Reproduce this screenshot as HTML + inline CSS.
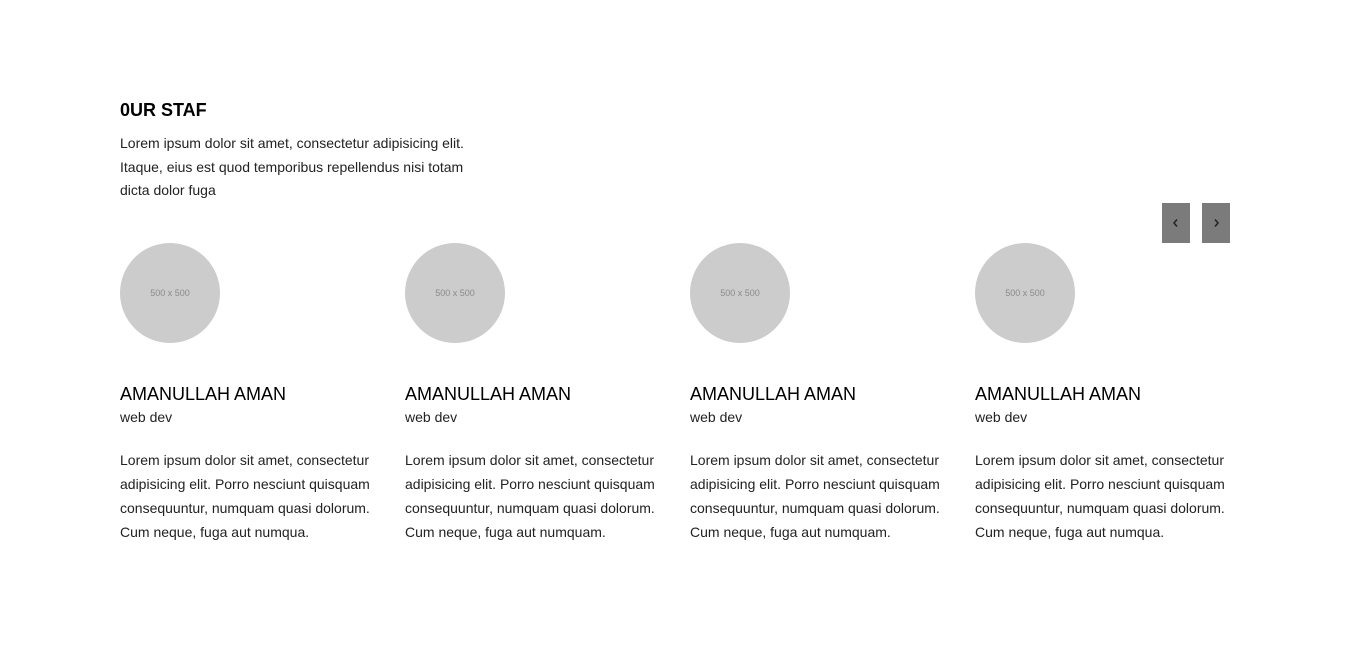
<!DOCTYPE html>
<html><head><meta charset="utf-8"><style>
*{margin:0;padding:0;box-sizing:border-box}
body{width:1349px;height:667px;background:#fff;font-family:"Liberation Sans",Arial,sans-serif;color:#222;position:relative;overflow:hidden}
.a{position:absolute}
h2{font-size:18px;font-weight:bold;color:#000;left:120px;top:100px}
.intro{left:120px;top:132px;width:370px;font-size:14px;line-height:23.5px}
.btn{width:28px;height:40px;background:#7b7b7b;top:203px}
.btn svg{position:absolute;left:9px;top:15px}
.col{width:265px;top:243px}
.circ{width:100px;height:100px;border-radius:50%;background:#ccc;color:#8a8a8a;font-size:9px;display:flex;align-items:center;justify-content:center}
.name{margin-top:40px;font-size:18px;color:#000;line-height:22px}
.role{font-size:14px;line-height:20px;margin-top:2px}
.desc{margin-top:21px;font-size:14px;line-height:24px}
</style></head><body>
<h2 class="a">0UR STAF</h2>
<p class="a intro">Lorem ipsum dolor sit amet, consectetur adipisicing elit. Itaque, eius est quod temporibus repellendus nisi totam dicta dolor fuga</p>
<div class="a btn" style="left:1162px"><svg width="10" height="10" viewBox="0 0 10 10"><path d="M6 1.5L3 5l3 3.5" fill="none" stroke="#222" stroke-width="1.5"/></svg></div>
<div class="a btn" style="left:1202px"><svg width="10" height="10" viewBox="0 0 10 10"><path d="M4 1.5L7 5l-3 3.5" fill="none" stroke="#222" stroke-width="1.5"/></svg></div>
<div class="a col" style="left:120px"><div class="circ">500 x 500</div><div class="name">AMANULLAH AMAN</div><div class="role">web dev</div><p class="desc">Lorem ipsum dolor sit amet, consectetur adipisicing elit. Porro nesciunt quisquam consequuntur, numquam quasi dolorum. Cum neque, fuga aut numqua.</p></div>
<div class="a col" style="left:405px"><div class="circ">500 x 500</div><div class="name">AMANULLAH AMAN</div><div class="role">web dev</div><p class="desc">Lorem ipsum dolor sit amet, consectetur adipisicing elit. Porro nesciunt quisquam consequuntur, numquam quasi dolorum. Cum neque, fuga aut numquam.</p></div>
<div class="a col" style="left:690px"><div class="circ">500 x 500</div><div class="name">AMANULLAH AMAN</div><div class="role">web dev</div><p class="desc">Lorem ipsum dolor sit amet, consectetur adipisicing elit. Porro nesciunt quisquam consequuntur, numquam quasi dolorum. Cum neque, fuga aut numquam.</p></div>
<div class="a col" style="left:975px"><div class="circ">500 x 500</div><div class="name">AMANULLAH AMAN</div><div class="role">web dev</div><p class="desc">Lorem ipsum dolor sit amet, consectetur adipisicing elit. Porro nesciunt quisquam consequuntur, numquam quasi dolorum. Cum neque, fuga aut numqua.</p></div>
</body></html>
